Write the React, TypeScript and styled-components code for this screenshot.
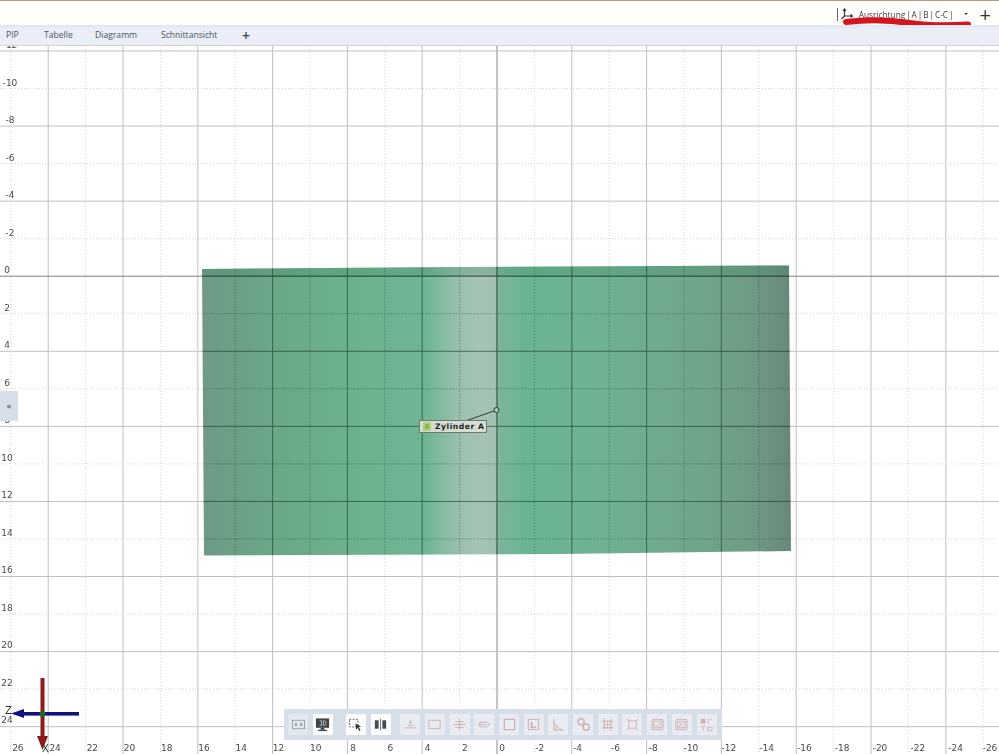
import React from "react";
import styled, { createGlobalStyle } from "styled-components";

const Global = createGlobalStyle`
  html, body { margin: 0; padding: 0; background: #fff; overflow: hidden; }
  #root { width: 999px; height: 754px; }
`;

const Page = styled.div`
  width: 999px;
  height: 754px;
  display: flex;
  flex-direction: column;
  background: #fff;
  font-family: "Open Sans", "Noto Sans", sans-serif;
  color: #3c4650;
  filter: blur(0.35px);
`;

const TopBar = styled.header`
  height: 24px;
  flex: none;
  border-top: 1px solid #b39a7f;
  background: #fffefb;
  display: flex;
  align-items: center;
  justify-content: flex-end;
  padding-right: 8px;
  position: relative;
  z-index: 2;
`;

const Orientation = styled.div`
  display: flex;
  align-items: center;
  font-size: 8.3px;
  color: #3a3f46;
  position: relative;
  top: 1px;
`;

const Divider = styled.span`
  width: 1px;
  height: 13px;
  background: #666;
  margin-right: 2px;
`;

const OrientationLabel = styled.span`
  margin-left: 5px;
  white-space: nowrap;
  word-spacing: -1.25px;
`;

const Caret = styled.span`
  width: 0;
  height: 0;
  margin-left: 10px;
  border-left: 2px solid transparent;
  border-right: 2px solid transparent;
  border-top: 2px solid #444;
`;

const PlusIcon = styled.span`
  font-size: 20px;
  font-weight: 400;
  line-height: 17px;
  color: #30343a;
  margin-left: 12px;
`;

const Scribble = styled.svg`
  position: absolute;
  left: 840px;
  top: 15px;
  pointer-events: none;
`;

const TabBar = styled.nav`
  height: 21px;
  flex: none;
  background: linear-gradient(#dfe6ef 0, #e9eef7 4px, #ebf0f8 100%);
  border-bottom: 1px solid #d8d3c8;
  box-sizing: border-box;
  display: flex;
  align-items: center;
  font-size: 8.6px;
  color: #4a545f;
  position: relative;
  z-index: 2;
`;

const Tab = styled.span<{ $w: number }>`
  flex: none;
  width: ${(p) => p.$w}px;
  white-space: nowrap;
  &:first-child { margin-left: 6px; }
`;

const TabPlus = styled.span`
  font-size: 14px;
  font-weight: 600;
  line-height: 13px;
  color: #3c4650;
`;

const Canvas = styled.main`
  flex: 1;
  position: relative;
  overflow: hidden;
`;

const Drawing = styled.svg`
  position: absolute;
  left: 0;
  top: 0;
  display: block;
`;

const GridLayer = styled.g`
  mix-blend-mode: multiply;
`;

const AxisText = styled.text`
  font-family: "DejaVu Sans", sans-serif;
  font-size: 9px;
  fill: #4a4a4a;
`;

const GizmoText = styled.text`
  font-family: "DejaVu Sans", sans-serif;
  font-size: 10px;
  fill: #333;
`;

const Collapse = styled.button`
  position: absolute;
  left: 0;
  top: 345px;
  width: 18px;
  height: 30px;
  border: 0;
  padding: 0;
  background: #d6deea;
  color: #3d4855;
  font-family: "DejaVu Sans", sans-serif;
  font-size: 9px;
  line-height: 30px;
  text-align: center;
`;

const ObjectLabel = styled.div`
  position: absolute;
  left: 419px;
  top: 374px;
  width: 68px;
  height: 13px;
  box-sizing: border-box;
  border: 1px solid #6f7a72;
  background: #d5dcd0;
  display: flex;
  align-items: center;
  gap: 4px;
  padding-left: 3px;
  font-family: "DejaVu Sans", sans-serif;
  font-weight: 700;
  font-size: 7.6px;
  letter-spacing: 0.55px;
  color: #1e1e1e;
  white-space: nowrap;
`;

const LabelSwatch = styled.span`
  width: 8px;
  height: 9px;
  flex: none;
  background: #86b84a;
  box-shadow: inset 0 0 0 2px #a9d07a;
`;

const Toolbar = styled.div`
  position: absolute;
  left: 284px;
  top: 663px;
  width: 438px;
  height: 31px;
  box-sizing: border-box;
  padding-left: 4px;
  background: #d6deea;
  display: flex;
  align-items: center;
  gap: 4.7px;
`;

const Tile = styled.span<{ $tone: "white" | "grey" | "pale"; $gap?: number }>`
  width: 20px;
  height: 21px;
  flex: none;
  margin-left: ${(p) => p.$gap ?? 0}px;
  display: flex;
  align-items: center;
  justify-content: center;
  background: ${(p) => (p.$tone === "white" ? "#fdfdfe" : p.$tone === "grey" ? "#e3e8ef" : "#e8ebf2")};
  color: ${(p) => (p.$tone === "pale" ? "#d0b0b0" : "#3a4048")};
`;

const xs = Array.from({ length: 27 }, (_, i) => 26 - i * 2);
const ys = Array.from({ length: 19 }, (_, i) => -12 + i * 2);

const px = (v: number) => 497 - v * 18.7;
const py = (v: number) => 276.2 + v * 18.77;

const xLabel = (v: number) => (v === -26 ? 990 : v > 0 ? 502 - v * 18.62 : 502 - v * 18.9);
const yLabel = (v: number) => 273 + v * 18.75;

const I = ({ children }: { children: React.ReactNode }) => (
  <svg width="15" height="15" viewBox="0 0 16 16" fill="none" stroke="currentColor" strokeWidth="1">
    {children}
  </svg>
);

const icons: React.ReactNode[] = [
  <><rect x="1.5" y="3.5" width="13" height="9" stroke="#9aa3ad" /><rect x="4" y="6.5" width="2.5" height="3" fill="#9aa3ad" stroke="none" /><rect x="9.5" y="6.5" width="2.5" height="3" fill="#9aa3ad" stroke="none" /></>,
  <><rect x="1" y="1.5" width="14" height="10" fill="#3f444b" stroke="none" /><rect x="6" y="11.5" width="4" height="2" fill="#3f444b" stroke="none" /><rect x="3.5" y="13.5" width="9" height="1.5" fill="#3f444b" stroke="none" /><path d="M5 4h2v5H5M9 4h1.5l1 1v3l-1 1H9z" stroke="#d8dce2" strokeWidth=".8" /></>,
  <><rect x="1.5" y="2.5" width="9" height="8" strokeDasharray="2 1.5" stroke="#5d646c" /><path d="M8 7l6 3-2.5 1 2 3-1.4.8-1.8-3-1.8 1.6z" fill="#33383f" stroke="none" /></>,
  <><rect x="2" y="3.5" width="4" height="9" fill="#454b53" stroke="none" /><rect x="10" y="3.5" width="4" height="9" fill="#454b53" stroke="none" /><path d="M8 1.5v13" stroke="#6d747c" /></>,
  <><path d="M2 11.5h12M5 9h6M8 3.5v5" /><path d="M6.5 5.5h3" /></>,
  <rect x="2" y="3.5" width="12" height="9" />,
  <><path d="M1.5 8h13M3.5 5h9M3.5 11h9M8 1.5v13" /></>,
  <><path d="M1.5 8h8M3 5.5h7l3.5 2.5-3.5 2.5H3z" /></>,
  <path d="M2.5 2.5h11v11h-11z" strokeWidth="1.3" />,
  <><rect x="2.5" y="2.5" width="11" height="11" /><path d="M6 5v6h5" strokeWidth="2" /></>,
  <><path d="M3 14V2M3 14h11M3 6l8 8" /><path d="M5.5 14v-5" /></>,
  <><circle cx="5.5" cy="5" r="3.3" strokeWidth="1.5" /><circle cx="10.8" cy="10.8" r="3.3" strokeWidth="1.5" /></>,
  <><rect x="4.5" y="4.5" width="7" height="7" /><path d="M1.5 4.5h13M1.5 11.5h13M4.5 1.5v13M11.5 1.5v13M8 4.5v7M4.5 8h7" strokeWidth=".8" /></>,
  <><rect x="4" y="4" width="8" height="8" /><path d="M2 2l2 2M14 2l-2 2M2 14l2-2M14 14l-2-2" /></>,
  <><rect x="2" y="2.5" width="12" height="11" rx="1" /><rect x="4" y="4.5" width="8" height="7" /><path d="M5.5 8.5l2 1.5 3-3.5" /></>,
  <><rect x="2" y="2.5" width="12" height="11" rx="1" /><rect x="4" y="4.5" width="8" height="7" /><path d="M5.5 5.5l5 5M10.5 5.5l-5 5" /></>,
  <><rect x="2" y="2" width="5" height="5" fill="currentColor" stroke="none" /><path d="M10 2v5M12 2l1.5 1.5M9 11h5v3.5H9zM2 10h5M4.5 10v4.5" strokeWidth=".9" /></>,
];

const tones: ("white" | "grey" | "pale")[] = [
  "grey", "white", "white", "white", "pale", "pale", "pale", "pale", "pale",
  "pale", "pale", "pale", "pale", "pale", "pale", "pale", "pale",
];

const tileGap = (i: number) => (i === 2 ? 8.5 : i === 4 ? 5 : 0);

const cylinderPath = "M202 269L460 267L789 265.5L791 551L560 554L204 555.5Z";

export default function App() {
  return (
    <Page>
      <Global />
      <TopBar>
        <Orientation>
          <Divider />
          <svg width="14" height="13" viewBox="0 0 13 13" fill="none" stroke="#33373d" strokeWidth="1.2">
            <path d="M4 1v7l-3 3M4 8h8M10 6.5l2 1.5-2 1.5" />
            <path d="M2.5 3L4 1l1.5 2" />
          </svg>
          <OrientationLabel>Ausrichtung | A | B | C-C |</OrientationLabel>
          <Caret />
          <PlusIcon>+</PlusIcon>
        </Orientation>
        <Scribble width="136" height="16" viewBox="0 0 136 16" fill="none">
          <path d="M6 6C30 3 50 4 70 7S105 10 128 8.5" stroke="#d5141e" strokeWidth="6" strokeLinecap="round" />
        </Scribble>
      </TopBar>
      <TabBar>
        <Tab $w={38}>PIP</Tab>
        <Tab $w={51}>Tabelle</Tab>
        <Tab $w={66}>Diagramm</Tab>
        <Tab $w={81}>Schnittansicht</Tab>
        <TabPlus>+</TabPlus>
      </TabBar>
      <Canvas>
        <Drawing width="999" height="708" viewBox="0 46 999 708">
          <defs>
            <linearGradient id="cyl" x1="0" x2="1" y1="0" y2="0">
              <stop offset="0" stopColor="#6f9a86" />
              <stop offset="0.06" stopColor="#6ba086" />
              <stop offset="0.14" stopColor="#6aa988" />
              <stop offset="0.27" stopColor="#6cb28f" />
              <stop offset="0.38" stopColor="#6fb593" />
              <stop offset="0.405" stopColor="#82bb9f" />
              <stop offset="0.44" stopColor="#9cc0ae" />
              <stop offset="0.47" stopColor="#a6c3b3" />
              <stop offset="0.498" stopColor="#a3c1b0" />
              <stop offset="0.503" stopColor="#7db59b" />
              <stop offset="0.55" stopColor="#6ab490" />
              <stop offset="0.66" stopColor="#6fb293" />
              <stop offset="0.76" stopColor="#70ab8e" />
              <stop offset="0.86" stopColor="#6fa48a" />
              <stop offset="0.94" stopColor="#6e9a84" />
              <stop offset="1" stopColor="#68877a" />
            </linearGradient>
            <clipPath id="cylClip">
              <path d={cylinderPath} />
            </clipPath>
          </defs>
          <path d={cylinderPath} fill="url(#cyl)" />
          <path d="M202 269L460 267L789 265.5V276H202Z" fill="#3f8a66" fillOpacity="0.28" />
          <GridLayer>
            {xs.map((v) =>
              v % 4 === 0 ? (
                <line key={v} x1={px(v)} x2={px(v)} y1="46" y2="754" stroke={v === 0 ? "#8a8a8a" : "#c0c0c0"} />
              ) : (
                <line key={v} x1={px(v)} x2={px(v)} y1="46" y2="754" stroke="#d6d6d6" strokeDasharray="1 2" />
              )
            )}
            {ys.map((v) =>
              v % 4 === 0 ? (
                <line key={v} y1={py(v)} y2={py(v)} x1="0" x2="999" stroke={v === 0 ? "#808080" : "#c0c0c0"} />
              ) : (
                <line key={v} y1={py(v)} y2={py(v)} x1="0" x2="999" stroke="#d4d4d4" strokeDasharray="1 2" />
              )
            )}
          </GridLayer>
          <g clipPath="url(#cylClip)">
            {xs.map((v) => (
              <line key={v} x1={px(v)} x2={px(v)} y1="260" y2="560" stroke="#1f4d36" strokeOpacity={v % 4 === 0 ? 0.45 : 0.12} />
            ))}
            {ys.map((v) => (
              <line key={v} y1={py(v)} y2={py(v)} x1="200" x2="795" stroke="#1f4d36" strokeOpacity={v % 4 === 0 ? 0.45 : 0.12} />
            ))}
          </g>
          {xs.map((v) => (
            <AxisText key={v} x={xLabel(v)} y="751" textAnchor="middle">{v}</AxisText>
          ))}
          {ys.map((v) => (
            <AxisText key={v} x={v < 0 ? 10 : 7} y={yLabel(v)} textAnchor="middle">{v}</AxisText>
          ))}
          <line x1="468" y1="420" x2="494" y2="411" stroke="#2e3a33" strokeWidth="1" />
          <circle cx="496.5" cy="410" r="2.6" fill="#a7c4b4" stroke="#2e3a33" />
          <rect x="40.5" y="678" width="4" height="60" fill="#8c1c1c" />
          <path d="M37 736h11l-5.5 14z" fill="#8c1c1c" />
          <rect x="22" y="712" width="57" height="3.6" fill="#10107e" />
          <path d="M24 709v9l-13-4.5z" fill="#10107e" />
          <circle cx="42.5" cy="714" r="3" fill="#1d6a2a" />
          <GizmoText x="5" y="714">Z</GizmoText>
          <GizmoText x="42" y="752">X</GizmoText>
        </Drawing>
        <Collapse>«</Collapse>
        <ObjectLabel>
          <LabelSwatch />
          Zylinder A
        </ObjectLabel>
        <Toolbar>
          {icons.map((body, i) => (
            <Tile key={i} $tone={tones[i]} $gap={tileGap(i)}>
              <I>{body}</I>
            </Tile>
          ))}
        </Toolbar>
      </Canvas>
    </Page>
  );
}
